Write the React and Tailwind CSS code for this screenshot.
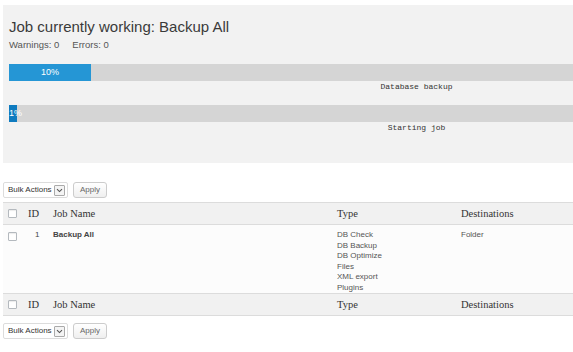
import React from "react";

const sans = { fontFamily: '"Liberation Sans", Arial, sans-serif' };

function Checkbox() {
  return <div className="w-[9px] h-[9px] border border-[#b4b9be] bg-white rounded-[1px] shadow-[inset_0_1px_1px_rgba(0,0,0,0.08)]" />;
}

function BulkBar() {
  return (
    <div className="flex items-center gap-[5px] h-[16px]">
      <div className="flex items-center h-[16px] w-[65px] border border-[#dcdcdc] bg-white rounded-[2px] pl-[4px] pr-[2px] justify-between">
        <span className="text-[8px] leading-none text-[#333]">Bulk Actions</span>
        <div className="w-[11px] h-[11px] border border-[#aaa] rounded-[1px] bg-[#f4f4f4] flex items-center justify-center">
          <svg width="7" height="5" viewBox="0 0 7 5">
            <path d="M1 1.2 L3.5 3.6 L6 1.2" fill="none" stroke="#555" strokeWidth="1.1" />
          </svg>
        </div>
      </div>
      <div className="h-[16px] w-[34px] border border-[#cccccc] rounded-[3px] bg-gradient-to-b from-white to-[#efefef] flex items-center justify-center text-[8px] leading-none text-[#666]">
        Apply
      </div>
    </div>
  );
}

function HeaderRow() {
  return (
    <div
      className="flex items-center h-[23px] bg-[#f1f1f1] border-[#dcdcdc] border-t border-b text-[10.5px] text-[#333]"
      style={{ fontFamily: '"Liberation Serif", "Times New Roman", serif' }}
    >
      <div className="w-[25px] pl-[5px] flex items-center"><Checkbox /></div>
      <div className="w-[25px]">ID</div>
      <div className="w-[284px]">Job Name</div>
      <div className="w-[124px]">Type</div>
      <div className="flex-1">Destinations</div>
    </div>
  );
}

function Bar({ pct, color, label, text }) {
  return (
    <div>
      <div className="h-[17px] bg-[#d5d5d5] flex">
        <div className={`h-full ${color} flex items-center justify-center text-white text-[9px] leading-none whitespace-nowrap`} style={{ width: pct }}>
          {text}
        </div>
      </div>
      <div className="mt-[1px] h-[10px] text-center text-[8px] leading-[10px] text-[#333]" style={{ fontFamily: '"Liberation Mono", "Courier New", monospace' }}>
        {label}
      </div>
    </div>
  );
}

export default function App() {
  const types = ["DB Check", "DB Backup", "DB Optimize", "Files", "XML export", "Plugins"];
  return (
    <div className="w-[573px] h-[352px] overflow-hidden bg-white" style={sans}>
      <div className="w-[827px] ml-[3px] pt-[5px]">
        <div className="bg-[#f2f2f2] pt-[13px] pb-[30px] px-[6px]">
          <div className="text-[15px] leading-[18px] text-[#3a3a3a]">Job currently working: Backup All</div>
          <div className="mt-[3px] text-[9.5px] leading-[12px] text-[#555] flex gap-[13px]">
            <span>Warnings: 0</span>
            <span>Errors: 0</span>
          </div>
          <div className="mt-[13px]">
            <Bar pct="82px" color="bg-[#2596d5]" label="Database backup" text="10%" />
          </div>
          <div className="mt-[13px]">
            <Bar pct="8px" color="bg-[#0f7bbf] justify-start" label="Starting job" text="1%" />
          </div>
        </div>

        <div className="mt-[19px]">
          <BulkBar />
        </div>

        <div className="mt-[4px]">
          <HeaderRow />
          <div className="flex bg-[#fcfcfc] h-[68px] pt-[5px] text-[8px] leading-[10.5px] text-[#555]">
            <div className="w-[25px] pl-[5px] pt-[2px]"><Checkbox /></div>
            <div className="w-[25px] pl-[7px] text-[#444]">1</div>
            <div className="w-[284px] font-bold text-[#444]">Backup All</div>
            <div className="w-[124px]">
              {types.map((t) => (
                <div key={t}>{t}</div>
              ))}
            </div>
            <div className="flex-1">Folder</div>
          </div>
          <HeaderRow />
        </div>

        <div className="mt-[7px]">
          <BulkBar />
        </div>
      </div>
    </div>
  );
}
